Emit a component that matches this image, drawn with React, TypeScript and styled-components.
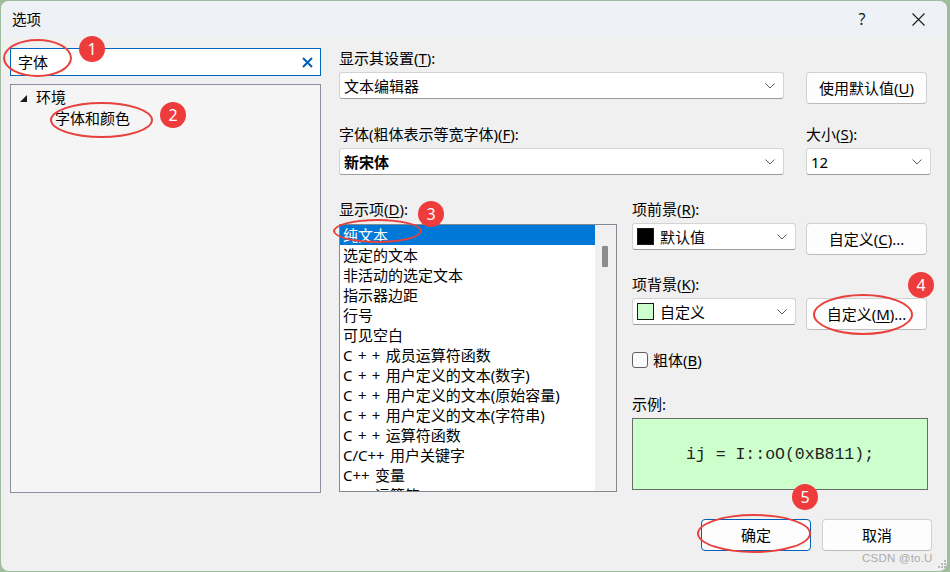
import React from "react";
import styled, { createGlobalStyle } from "styled-components";

const UI_FONT = `"Noto Sans", "Noto Sans CJK SC", sans-serif`;

const GlobalStyle = createGlobalStyle`
  html, body {
    margin: 0;
    padding: 0;
    background: #9fbd9d;
  }
  body {
    font-family: ${UI_FONT};
    font-size: 15px;
    color: #000;
  }
  * {
    box-sizing: border-box;
  }
  u {
    text-underline-offset: 2px;
  }
`;

const listItems = [
  "纯文本",
  "选定的文本",
  "非活动的选定文本",
  "指示器边距",
  "行号",
  "可见空白",
  "C + + 成员运算符函数",
  "C + + 用户定义的文本(数字)",
  "C + + 用户定义的文本(原始容量)",
  "C + + 用户定义的文本(字符串)",
  "C + + 运算符函数",
  "C/C++ 用户关键字",
  "C++ 变量",
  "C++ 运算符",
];

const marks = [
  { n: 1, ring: [3, 39, 69, 38], badge: [92, 49] },
  { n: 2, ring: [50, 102, 103, 36], badge: [173, 115] },
  { n: 3, ring: [333, 219, 89, 24], badge: [431, 214] },
  { n: 4, ring: [813, 294, 100, 41], badge: [921, 285] },
  { n: 5, ring: [697, 514, 114, 39], badge: [805, 497] },
];

function Chevron() {
  return (
    <ChevronIcon width="10" height="6" viewBox="0 0 10 6">
      <path d="M0.5 0.5 L5 5 L9.5 0.5" fill="none" stroke="#5c5c5c" strokeWidth="1" />
    </ChevronIcon>
  );
}

function App() {
  return (
    <Page>
      <GlobalStyle />
      <Window>
        <TitleBar>
          <Title>选项</Title>
          <TitleButtons>
            <TitleButton>?</TitleButton>
            <TitleButton>
              <svg width="13" height="13" viewBox="0 0 13 13">
                <path d="M0.5 0.5 L12.5 12.5 M12.5 0.5 L0.5 12.5" stroke="#1a1a1a" strokeWidth="1.1" />
              </svg>
            </TitleButton>
          </TitleButtons>
        </TitleBar>

        <Body>
          <LeftPane>
            <SearchBox>
              <span>字体</span>
              <ClearIcon width="11" height="11" viewBox="0 0 11 11">
                <path d="M1 1 L10 10 M10 1 L1 10" stroke="#005fb8" strokeWidth="2" />
              </ClearIcon>
            </SearchBox>
            <Tree>
              <TreeRow $indent={0}>
                <svg width="7" height="7" viewBox="0 0 7 7">
                  <path d="M7 0 L7 7 L0 7 Z" fill="#1a1a1a" />
                </svg>
                <span>环境</span>
              </TreeRow>
              <TreeRow $indent={35}>字体和颜色</TreeRow>
            </Tree>
          </LeftPane>

          <RightPane>
            <Row>
              <Field $width={445}>
                <Label>
                  显示其设置(<u>T</u>):
                </Label>
                <Combo>
                  文本编辑器
                  <Chevron />
                </Combo>
              </Field>
              <Button $width={121} $top={24}>
                使用默认值(<u>U</u>)
              </Button>
            </Row>

            <Row $top={20}>
              <Field $width={445}>
                <Label>
                  字体(粗体表示等宽字体)(<u>F</u>):
                </Label>
                <Combo $bold>
                  新宋体
                  <Chevron />
                </Combo>
              </Field>
              <Field $width={125}>
                <Label>
                  大小(<u>S</u>):
                </Label>
                <Combo>
                  12
                  <Chevron />
                </Combo>
              </Field>
            </Row>

            <LowerArea>
              <Field $width={278} $gap={5}>
                <Label>
                  显示项(<u>D</u>):
                </Label>
                <ListBox>
                  <ListItems>
                    {listItems.map((item, i) => (
                      <ListItem key={item} $selected={i === 0}>
                        {item}
                      </ListItem>
                    ))}
                  </ListItems>
                  <ScrollTrack>
                    <ScrollThumb />
                  </ScrollTrack>
                </ListBox>
              </Field>

              <PropsColumn>
                <Label>
                  项前景(<u>R</u>):
                </Label>
                <ControlRow>
                  <Combo $width={164}>
                    <Swatch $color="#000000" />
                    默认值
                    <Chevron />
                  </Combo>
                  <Button $width={121}>
                    自定义(<u>C</u>)...
                  </Button>
                </ControlRow>

                <Label $top={19}>
                  项背景(<u>K</u>):
                </Label>
                <ControlRow>
                  <Combo $width={164}>
                    <Swatch $color="#ccffcc" />
                    自定义
                    <Chevron />
                  </Combo>
                  <Button $width={121}>
                    自定义(<u>M</u>)...
                  </Button>
                </ControlRow>

                <CheckRow>
                  <CheckBox />
                  <span>
                    粗体(<u>B</u>)
                  </span>
                </CheckRow>

                <Label $top={24}>示例:</Label>
                <Sample>ij = I::oO(0xB811);</Sample>
              </PropsColumn>
            </LowerArea>
          </RightPane>
        </Body>

        <Footer>
          <Button $width={110} $primary>
            确定
          </Button>
          <Button $width={110}>取消</Button>
        </Footer>
      </Window>

      <Watermark>CSDN @to.U</Watermark>
      <Grip width="9" height="9" viewBox="0 0 9 9">
        {[
          [7, 1],
          [4, 4],
          [7, 4],
          [1, 7],
          [4, 7],
          [7, 7],
        ].map(([cx, cy]) => (
          <rect key={`${cx}-${cy}`} x={cx - 1} y={cy - 1} width="2" height="2" fill="#b8b8b8" />
        ))}
      </Grip>

      {marks.map((m) => (
        <React.Fragment key={m.n}>
          <Ring $x={m.ring[0]} $y={m.ring[1]} $w={m.ring[2]} $h={m.ring[3]} />
          <Badge $x={m.badge[0]} $y={m.badge[1]}>
            {m.n}
          </Badge>
        </React.Fragment>
      ))}
    </Page>
  );
}

const Page = styled.div`
  position: relative;
  width: 950px;
  height: 572px;
  padding: 1px 3px 1px 1px;
  overflow: hidden;
`;

const Window = styled.div`
  width: 946px;
  height: 570px;
  background: #f0f0f0;
  border-radius: 8px;
  overflow: hidden;
  display: flex;
  flex-direction: column;
`;

const TitleBar = styled.div`
  height: 36px;
  flex: none;
  display: flex;
  align-items: center;
  padding-left: 11px;
  background: #eef2f6;
`;

const Title = styled.div`
  font-size: 14.5px;
  line-height: 20px;
`;

const TitleButtons = styled.div`
  margin-left: auto;
  margin-right: 6px;
  display: flex;
  gap: 10px;
  height: 100%;
`;

const TitleButton = styled.div`
  width: 46px;
  height: 100%;
  display: flex;
  align-items: center;
  justify-content: center;
  font-size: 16px;
  color: #1a1a1a;
`;

const Body = styled.div`
  display: flex;
  gap: 18px;
  padding: 11px 0 0 9px;
`;

const LeftPane = styled.div`
  width: 311px;
  display: flex;
  flex-direction: column;
  gap: 8px;
`;

const SearchBox = styled.div`
  height: 28px;
  display: flex;
  align-items: center;
  padding: 0 7px;
  background: #fff;
  border: 1px solid #0067c0;
  line-height: 20px;
`;

const ClearIcon = styled.svg`
  margin-left: auto;
`;

const Tree = styled.div`
  height: 409px;
  padding: 2px 0 0 9px;
  background: #f5f5f5;
  border: 1px solid #8c8f9c;
`;

const TreeRow = styled.div<{ $indent: number }>`
  height: 21px;
  display: flex;
  align-items: center;
  gap: 9px;
  padding-left: ${({ $indent }) => $indent}px;
  line-height: 21px;

  svg {
    margin-top: 1px;
  }
`;

const RightPane = styled.div`
  display: flex;
  flex-direction: column;
  width: 593px;
`;

const Row = styled.div<{ $top?: number }>`
  display: flex;
  align-items: flex-start;
  gap: 22px;
  margin-top: ${({ $top = 0 }) => $top}px;
`;

const Field = styled.div<{ $width: number; $gap?: number }>`
  width: ${({ $width }) => $width}px;
  display: flex;
  flex-direction: column;
  gap: ${({ $gap = 4 }) => $gap}px;
`;

const Label = styled.div<{ $top?: number }>`
  height: 20px;
  line-height: 20px;
  white-space: nowrap;
  margin-top: ${({ $top = 0 }) => $top}px;
`;

const Combo = styled.div<{ $bold?: boolean; $width?: number }>`
  height: 27px;
  ${({ $width }) => ($width ? `width: ${$width}px; flex: none;` : "")}
  display: flex;
  align-items: center;
  gap: 6px;
  padding: 0 4px;
  background: #fff;
  border: 1px solid #d3d3d3;
  border-bottom-color: #9c9c9c;
  border-radius: 3px;
  line-height: 20px;
  font-weight: ${({ $bold }) => ($bold ? 700 : 400)};
  white-space: nowrap;
`;

const ChevronIcon = styled.svg`
  margin-left: auto;
  margin-right: 4px;
  flex: none;
`;

const Swatch = styled.div<{ $color: string }>`
  width: 17px;
  height: 17px;
  flex: none;
  background: ${({ $color }) => $color};
  border: 1px solid #1a1a1a;
`;

const Button = styled.div<{ $width: number; $top?: number; $primary?: boolean }>`
  width: ${({ $width }) => $width}px;
  height: 32px;
  flex: none;
  margin-top: ${({ $top = 0 }) => $top}px;
  display: flex;
  align-items: center;
  justify-content: center;
  background: #fdfdfd;
  border: 1px solid ${({ $primary }) => ($primary ? "#005fb8" : "#d0d0d0")};
  border-bottom-color: ${({ $primary }) => ($primary ? "#005fb8" : "#bcbcbc")};
  border-radius: 4px;
  line-height: 20px;
  white-space: nowrap;
`;

const LowerArea = styled.div`
  display: flex;
  gap: 15px;
  margin-top: 24px;
`;

const ListBox = styled.div`
  height: 268px;
  display: flex;
  background: #fff;
  border: 1px solid #828790;
  overflow: hidden;
`;

const ListItems = styled.div`
  flex: 1;
  overflow: hidden;
`;

const ListItem = styled.div<{ $selected?: boolean }>`
  height: 20px;
  line-height: 20px;
  padding-left: 3px;
  white-space: nowrap;
  word-spacing: 1.5px;
  background: ${({ $selected }) => ($selected ? "#0078d7" : "transparent")};
  color: ${({ $selected }) => ($selected ? "#fff" : "#000")};
`;

const ScrollTrack = styled.div`
  width: 21px;
  flex: none;
  padding-top: 21px;
  background: #f0f0f0;
`;

const ScrollThumb = styled.div`
  width: 6px;
  height: 21px;
  margin-left: 7px;
  background: #8c8c8c;
  border-radius: 1px;
`;

const PropsColumn = styled.div`
  width: 299px;
  display: flex;
  flex-direction: column;
`;

const ControlRow = styled.div`
  display: flex;
  align-items: flex-start;
  gap: 10px;
  margin-top: 4px;
`;

const CheckRow = styled.div`
  height: 20px;
  margin-top: 20px;
  display: flex;
  align-items: center;
  gap: 5px;
  line-height: 20px;
`;

const CheckBox = styled.div`
  width: 16px;
  height: 16px;
  background: #fbfbfb;
  border: 1px solid #5f5f5f;
  border-radius: 3px;
`;

const Sample = styled.div`
  width: 296px;
  height: 72px;
  margin-top: 4px;
  display: flex;
  align-items: center;
  justify-content: center;
  background: #ccffcc;
  border: 1px solid #6a6a6a;
  font-family: "Liberation Mono", "DejaVu Sans Mono", monospace;
  font-size: 16.5px;
  color: #222;
  white-space: pre;
`;

const Footer = styled.div`
  display: flex;
  justify-content: flex-end;
  gap: 11px;
  margin-top: 26px;
  padding-right: 15px;
`;

const Watermark = styled.div`
  position: absolute;
  left: 862px;
  top: 551px;
  font-family: "Liberation Sans", Arial, sans-serif;
  font-size: 11.5px;
  line-height: 14px;
  color: #ababab;
  letter-spacing: 0.2px;
`;

const Grip = styled.svg`
  position: absolute;
  left: 938px;
  top: 560px;
`;

const Ring = styled.div<{ $x: number; $y: number; $w: number; $h: number }>`
  position: absolute;
  left: ${({ $x }) => $x}px;
  top: ${({ $y }) => $y}px;
  width: ${({ $w }) => $w}px;
  height: ${({ $h }) => $h}px;
  border: 2px solid #e8403c;
  border-radius: 50%;
  pointer-events: none;
`;

const Badge = styled.div<{ $x: number; $y: number }>`
  position: absolute;
  left: ${({ $x }) => $x - 13}px;
  top: ${({ $y }) => $y - 13}px;
  width: 26px;
  height: 26px;
  border-radius: 50%;
  background: #ee3b3b;
  color: #fff;
  display: flex;
  align-items: center;
  justify-content: center;
  font-family: "Noto Sans", sans-serif;
  font-size: 16px;
  line-height: 1;
`;

export default App;
